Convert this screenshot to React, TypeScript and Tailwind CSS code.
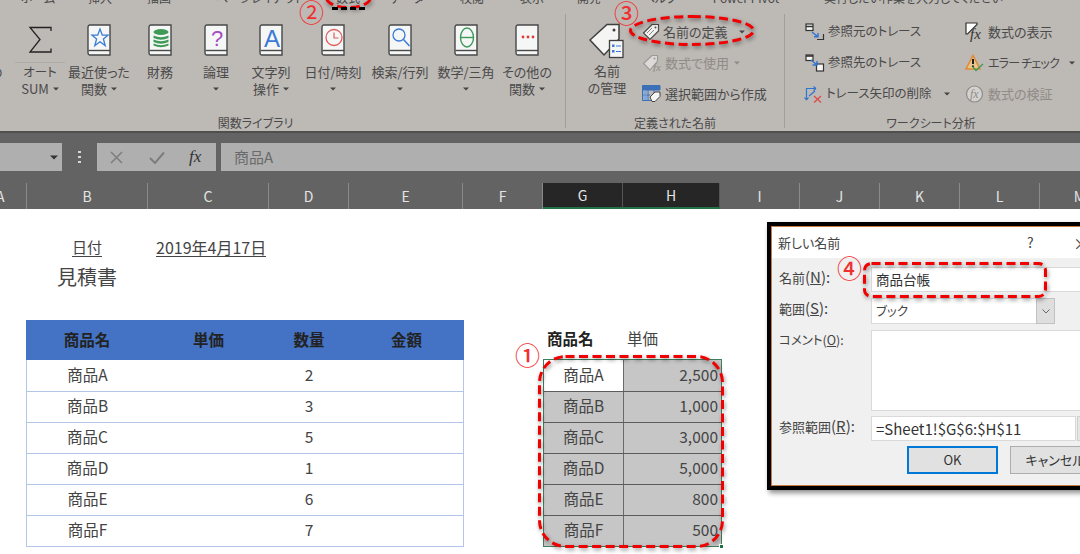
import type { ReactNode } from "react";

const TABS: [string, string][] = [
  ["ホーム", "w-[76px]"],
  ["挿入", "w-[48px]"],
  ["描画", "w-[70px]"],
  ["ページレイアウト", "w-[132px]"],
  ["数式", "w-[44px]"],
  ["データ", "w-[74px]"],
  ["校閲", "w-[56px]"],
  ["表示", "w-[64px]"],
  ["開発", "w-[50px]"],
  ["ヘルプ", "w-[92px]"],
  ["Power Pivot", "w-[80px]"],
];

const COLS: [string, string, boolean][] = [
  ["B", "w-[121px]", false],
  ["C", "w-[121px]", false],
  ["D", "w-[80px]", false],
  ["E", "w-[114px]", false],
  ["F", "w-[80px]", false],
  ["G", "w-[80px]", true],
  ["H", "w-[97px]", true],
  ["I", "w-[80px]", false],
  ["J", "w-[80px]", false],
  ["K", "w-[80px]", false],
  ["L", "w-[80px]", false],
  ["M", "w-[80px]", false],
];

const ITEMS = [
  { name: "商品A", qty: "2", price: "2,500" },
  { name: "商品B", qty: "3", price: "1,000" },
  { name: "商品C", qty: "5", price: "3,000" },
  { name: "商品D", qty: "1", price: "5,000" },
  { name: "商品E", qty: "6", price: "800" },
  { name: "商品F", qty: "7", price: "500" },
];

function Caret({ gray }: { gray?: boolean }) {
  return (
    <svg width="6" height="4" viewBox="0 0 6 4" className="inline-block shrink-0">
      <path d="M0 0.500H6L3 3.500Z" fill={gray ? "#8f8b87" : "#444"} />
    </svg>
  );
}

function Book({ children }: { children: ReactNode }) {
  return (
    <svg width="24" height="32" viewBox="0 0 24 32">
      <path d="M3 1H23V31H3Q1 31 1 28.500V3.500Q1 1 3 1Z" fill="#f5f7f7" stroke="#484848" strokeWidth="1.400" />
      <path d="M1.500 26.500H23" stroke="#484848" strokeWidth="1.400" />
      {children}
    </svg>
  );
}

function FuncButton({
  icon,
  line1,
  line2,
  w,
}: {
  icon: ReactNode;
  line1: string;
  line2?: string;
  w: string;
}) {
  return (
    <div className={`${w} flex flex-col items-center shrink-0`}>
      <div className="h-[49px] pt-[10px] flex items-start justify-center">{icon}</div>
      <div className="text-[13px] leading-[17px] text-center whitespace-nowrap">{line1}</div>
      <div className="h-[17px] flex items-center justify-center gap-[4px] text-[13px] leading-[17px] whitespace-nowrap">
        {line2 && <span>{line2}</span>}
        <Caret />
      </div>
    </div>
  );
}

function SmallRow({
  icon,
  label,
  caret,
  gray,
  gap,
  caretGap,
  labelClass,
}: {
  icon: ReactNode;
  label: string;
  caret?: boolean;
  gray?: boolean;
  gap: string;
  caretGap?: string;
  labelClass?: string;
}) {
  return (
    <div className={`h-[31px] flex items-center ${gap} whitespace-nowrap ${gray ? "text-[#8f8b87]" : ""}`}>
      {icon}
      <span className={labelClass ?? "text-[13px]"}>{label}</span>
      {caret && (
        <span className={`flex ${caretGap ?? "ml-[2px]"}`}>
          <Caret gray={gray} />
        </span>
      )}
    </div>
  );
}

function TagIcon() {
  return (
    <svg width="18" height="18" viewBox="0 0 18 18">
      <path d="M1.500 10L10 1.500H16.500V8L8 16.500Z" fill="#f2f2f0" stroke="#4a4a4a" strokeWidth="1.200" />
      <circle cx="13.500" cy="4.500" r="1" fill="#4a4a4a" />
      <path d="M5 10L10 5M7 12L12 7" stroke="#777" strokeWidth="0.900" />
    </svg>
  );
}

function FxText({ x, y, size, fill }: { x: number; y: number; size: number; fill: string }) {
  return (
    <text x={x} y={y} fontSize={size} fill={fill} fontStyle="italic" fontFamily="'Liberation Serif', serif">
      fx
    </text>
  );
}

function Ribbon() {
  return (
    <div className="h-[131px] bg-[#bdb9b5] text-[#4a4a4a] overflow-hidden">
      <div className="h-[14px] overflow-hidden flex">
        {TABS.map(([t, w]) => (
          <div key={t} className={`${w} text-center text-[12px] leading-[14px] -mt-[9px] whitespace-nowrap`}>
            {t}
          </div>
        ))}
        <div className="ml-[38px] text-[12px] leading-[14px] -mt-[9px] whitespace-nowrap">
          実行したい作業を入力してください
        </div>
      </div>

      <div className="flex h-[117px]">
        {/* 関数ライブラリ */}
        <div className="w-[566px] h-[114px] border-r border-[#a29e9a] flex flex-col shrink-0">
          <div className="flex-1 flex pl-[15px] relative">
            <span className="absolute left-0 top-[49px] text-[13px] leading-[17px] -ml-[10px]">の</span>
            <div className="w-[50px] flex flex-col items-center shrink-0">
              <div className="h-[49px] pt-[12px] w-full flex flex-col items-center border-b border-[#aeaaa6]">
                <svg width="24" height="28" viewBox="0 0 24 28">
                  <path d="M23 5V1.500H2L12 13.500L2 26H23V22.500" fill="none" stroke="#222" strokeWidth="1.300" />
                </svg>
              </div>
              <div className="text-[12.500px] leading-[17px] text-center">オート</div>
              <div className="h-[17px] flex items-center gap-[4px] text-[13px] leading-[17px]">
                <span>SUM</span>
                <Caret />
              </div>
            </div>
            <FuncButton
              w="w-[68px]"
              line1="最近使った"
              line2="関数"
              icon={
                <Book>
                  <path
                    d="M13 5L15.300 11.200H21L16.400 15L18.200 21.500L13 17.700L7.800 21.500L9.600 15L5 11.200H10.700Z"
                    fill="none"
                    stroke="#3b7ad6"
                    strokeWidth="1.300"
                  />
                </Book>
              }
            />
            <FuncButton
              w="w-[54px]"
              line1="財務"
              icon={
                <Book>
                  <ellipse cx="13" cy="8" rx="7.500" ry="3" fill="#3f9a58" />
                  <path d="M5.500 11.500Q13 15 20.500 11.500V14Q13 17.500 5.500 14ZM5.500 15.500Q13 19 20.500 15.500V18Q13 21.500 5.500 18ZM5.500 19.500Q13 23 20.500 19.500V21.500Q13 25 5.500 21.500Z" fill="#3f9a58" />
                </Book>
              }
            />
            <FuncButton
              w="w-[58px]"
              line1="論理"
              icon={
                <Book>
                  <text x="13" y="22" textAnchor="middle" fontSize="22" fill="#a64dc4" fontFamily="'Liberation Sans', sans-serif">
                    ?
                  </text>
                </Book>
              }
            />
            <FuncButton
              w="w-[52px]"
              line1="文字列"
              line2="操作"
              icon={
                <Book>
                  <text x="13" y="22.500" textAnchor="middle" fontSize="24" fill="#3b7ad6" fontFamily="'Liberation Sans', sans-serif">
                    A
                  </text>
                </Book>
              }
            />
            <FuncButton
              w="w-[72px]"
              line1="日付/時刻"
              icon={
                <Book>
                  <circle cx="13" cy="13.500" r="8" fill="none" stroke="#e45a5a" strokeWidth="1.300" />
                  <path d="M13 8.500V14H17.500" fill="none" stroke="#e45a5a" strokeWidth="1.200" />
                </Book>
              }
            />
            <FuncButton
              w="w-[62px]"
              line1="検索/行列"
              icon={
                <Book>
                  <circle cx="11" cy="11" r="6" fill="none" stroke="#3b7ad6" strokeWidth="1.300" />
                  <path d="M15.500 15.500L21.500 22" stroke="#3b7ad6" strokeWidth="1.500" />
                </Book>
              }
            />
            <FuncButton
              w="w-[70px]"
              line1="数学/三角"
              icon={
                <Book>
                  <ellipse cx="13" cy="13.500" rx="6.500" ry="9.500" fill="none" stroke="#3f9a58" strokeWidth="1.400" />
                  <path d="M6.500 13.500H19.500" stroke="#3f9a58" strokeWidth="1.400" />
                </Book>
              }
            />
            <FuncButton
              w="w-[52px]"
              line1="その他の"
              line2="関数"
              icon={
                <Book>
                  <circle cx="8" cy="13" r="1.400" fill="#e03a3a" />
                  <circle cx="13" cy="13" r="1.400" fill="#e03a3a" />
                  <circle cx="18" cy="13" r="1.400" fill="#e03a3a" />
                </Book>
              }
            />
          </div>
          <div className="h-[15px] -mb-[2px] text-[12px] leading-[15px] text-center pr-[54px]">関数ライブラリ</div>
        </div>

        {/* 定義された名前 */}
        <div className="w-[219px] h-[114px] border-r border-[#a29e9a] flex flex-col shrink-0">
          <div className="flex-1 flex pl-[17px]">
            <div className="w-[48px] flex flex-col items-center shrink-0">
              <div className="h-[48px] pt-[9px]">
                <svg width="38" height="36" viewBox="0 0 38 36">
                  <path d="M2 17L19 1.500H31V16L16 32Z" fill="#f5f5f3" stroke="#3f3f3f" strokeWidth="1.500" />
                  <circle cx="26" cy="7" r="1.500" fill="#3f3f3f" />
                  <rect x="21.500" y="17.500" width="13.500" height="17" fill="#f5f7f7" stroke="#3f3f3f" strokeWidth="1.300" />
                  <path d="M24 21.500h2.500v2.500h-2.500zM24 27h2.500v2.500h-2.500z" fill="#3b7ad6" />
                  <path d="M28 23H33M28 28.500H33" stroke="#3b7ad6" strokeWidth="1.200" />
                </svg>
              </div>
              <div className="text-[13px] leading-[17px]">名前</div>
              <div className="text-[13px] leading-[17px] whitespace-nowrap">の管理</div>
            </div>
            <div className="ml-[11px] pt-[2px] flex flex-col">
              <SmallRow icon={<TagIcon />} label="名前の定義" caret gap="gap-[3px]" caretGap="ml-[8px]" />
              <SmallRow
                gray
                gap="gap-[3px]"
                label="数式で使用"
                caret
                icon={
                  <svg width="20" height="18" viewBox="0 0 20 18">
                    <path d="M1.500 9.500L10 1.500H15.500V7L8 16Z" fill="#dcdad8" stroke="#9a9794" strokeWidth="1.100" />
                    <circle cx="12.500" cy="4.500" r="1" fill="#9a9794" />
                    <FxText x={11} y={17} size={11} fill="#8f8b87" />
                  </svg>
                }
              />
              <SmallRow
                gap="gap-[4px]"
                label="選択範囲から作成"
                icon={
                  <svg width="19" height="17" viewBox="0 0 19 17">
                    <path d="M0.500 0.500H18V5H0.500Z" fill="#3b6fb8" stroke="#3b6fb8" />
                    <path d="M0.500 5V15.500H10M0.500 10H8M6 5V15.500M12 5V8" fill="none" stroke="#3b6fb8" strokeWidth="1" />
                    <path d="M1.500 6h4v3.500h-4zM1.500 11h4v4h-4z" fill="#7fa8dc" />
                    <path d="M8 12L13 7H18V11.500L13 16.500H10Z" fill="#f5f5f3" stroke="#444" strokeWidth="1" />
                  </svg>
                }
              />
            </div>
          </div>
          <div className="h-[15px] -mb-[2px] text-[12px] leading-[15px] text-center">定義された名前</div>
        </div>

        {/* ワークシート分析 */}
        <div className="flex-1 h-[114px] flex flex-col min-w-0">
          <div className="flex-1 flex">
            <div className="w-[180px] pl-[20px] pt-[2px] flex flex-col shrink-0">
              <SmallRow
                gap="gap-[3px]"
                label="参照元のトレース"
                labelClass="text-[12.500px]"
                icon={
                  <svg width="20" height="18" viewBox="0 0 20 18">
                    <rect x="1" y="1" width="7" height="6.500" fill="#f5f5f3" stroke="#333" strokeWidth="1.200" />
                    <path d="M1 3.500H8" stroke="#333" strokeWidth="1.500" />
                    <path d="M12 16.500H18.500V11" fill="none" stroke="#333" strokeWidth="1.200" />
                    <path d="M7 9L12.500 13.500M9 13.800H13V10" fill="none" stroke="#2f74d0" strokeWidth="1.400" />
                  </svg>
                }
              />
              <SmallRow
                gap="gap-[3px]"
                label="参照先のトレース"
                labelClass="text-[12.500px]"
                icon={
                  <svg width="20" height="18" viewBox="0 0 20 18">
                    <rect x="1" y="1" width="7" height="5.500" fill="#f5f5f3" stroke="#333" strokeWidth="1.200" />
                    <path d="M1 2H8" stroke="#333" strokeWidth="1.600" />
                    <rect x="11.500" y="10" width="7" height="7" fill="#f5f5f3" stroke="#333" strokeWidth="1.200" />
                    <path d="M6 6L11.500 10.500M7.500 11H12V7" fill="none" stroke="#2f74d0" strokeWidth="1.400" />
                  </svg>
                }
              />
              <div className="-ml-[1px]">
                <SmallRow
                  gap="gap-[4px]"
                  label="トレース矢印の削除"
                  labelClass="text-[12.500px]"
                  caret
                  caretGap="ml-[8px]"
                  icon={
                    <svg width="18" height="18" viewBox="0 0 18 18">
                      <path d="M2.500 15V3.500H12M2.500 15L0.500 12.500M2.500 15L4.500 12.500M12 3.500L9.500 1.500M12 3.500L9.500 5.500M5 11L11 6" fill="none" stroke="#2f74d0" strokeWidth="1.200" />
                      <path d="M10 11L17 17.500M17 11L10 17.500" stroke="#e04a4a" strokeWidth="1.300" />
                    </svg>
                  }
                />
              </div>
            </div>
            <div className="pt-[2px] flex flex-col">
              <SmallRow
                gap="gap-[4px]"
                label="数式の表示"
                icon={
                  <svg width="19" height="20" viewBox="0 0 19 20">
                    <path d="M1 1H12V2.500L2.500 12H1Z" fill="#fff" stroke="#333" strokeWidth="1.200" />
                    <FxText x={5} y={17} size={15} fill="#333" />
                  </svg>
                }
              />
              <SmallRow
                gap="gap-[4px]"
                label="エラー チェック"
                labelClass="text-[12px] tracking-[-0.800px]"
                caret
                caretGap="ml-[6px]"
                icon={
                  <svg width="19" height="18" viewBox="0 0 19 18">
                    <path d="M8 1.500L1 15H15Z" fill="#e9c48d" stroke="#e08a35" strokeWidth="1.500" />
                    <path d="M8 5V10" stroke="#222" strokeWidth="2" />
                    <circle cx="8" cy="12.300" r="1" fill="#222" />
                    <path d="M8 13L11 16.500L18 10" fill="none" stroke="#3f9a58" strokeWidth="1.400" />
                  </svg>
                }
              />
              <SmallRow
                gray
                gap="gap-[4px]"
                label="数式の検証"
                icon={
                  <svg width="19" height="18" viewBox="0 0 19 18">
                    <circle cx="9.500" cy="9" r="8" fill="#d4d2cf" stroke="#8f8b87" strokeWidth="1.200" />
                    <FxText x={5} y={13} size={12} fill="#8f8b87" />
                  </svg>
                }
              />
            </div>
          </div>
          <div className="h-[15px] -mb-[2px] text-[12px] leading-[15px] text-center pr-[3px]">ワークシート分析</div>
        </div>
      </div>
    </div>
  );
}

function FormulaBar() {
  return (
    <div className="h-[52px] bg-[#636363] border-t-2 border-[#4f4f4f] pt-[10px] flex items-start">
      <div className="w-[62px] h-[28px] bg-[#afafaf] flex items-center justify-end pr-[4px]">
        <svg width="8" height="5" viewBox="0 0 8 5">
          <path d="M0 0.500H8L4 4.500Z" fill="#333" />
        </svg>
      </div>
      <div className="w-[35px] h-[28px] flex flex-col items-center justify-center gap-[3px]">
        <span className="w-[3px] h-[2px] bg-[#d8d8d8]" />
        <span className="w-[3px] h-[2px] bg-[#d8d8d8]" />
        <span className="w-[3px] h-[2px] bg-[#d8d8d8]" />
      </div>
      <div className="w-[119px] h-[28px] bg-[#afafaf] flex items-center pl-[13px]">
        <svg width="13" height="13" viewBox="0 0 13 13">
          <path d="M1 1L12 12M12 1L1 12" stroke="#7d7d7d" strokeWidth="1.500" />
        </svg>
        <svg width="16" height="13" viewBox="0 0 16 13" className="ml-[26px]">
          <path d="M1 7L6 12L15 1.500" fill="none" stroke="#7d7d7d" strokeWidth="2" />
        </svg>
        <span className="ml-[24px] text-[17px] italic text-[#333] font-['Liberation_Serif',serif]">fx</span>
      </div>
      <div className="flex-1 ml-[5px] h-[28px] bg-[#afafaf] pl-[13px] text-[15px] leading-[28px] text-[#6a6a6a]">商品A</div>
    </div>
  );
}

function ColumnHeaders() {
  return (
    <div className="h-[26px] bg-[#636363] flex overflow-hidden">
      <div className="w-[27px] h-full shrink-0 flex items-center border-r border-[#8a8a8a] text-[14px] text-[#e4e4e4]">
        <span className="-ml-[4px]">A</span>
      </div>
      {COLS.map(([c, w, active]) => (
        <div
          key={c}
          className={`${w} h-full shrink-0 flex items-center justify-center text-[14px] text-[#e4e4e4] border-r ${
            active ? "bg-[#262626] border-[#555] border-b-2 border-b-[#217346]" : "border-[#8a8a8a]"
          }`}
        >
          {c}
        </div>
      ))}
    </div>
  );
}

function Sheet() {
  return (
    <div className="flex-1 flex text-[#444] bg-white">
      <div className="w-[543px] shrink-0 pl-[26px] pt-[23px]">
        <div className="h-[31px] flex items-center">
          <div className="w-[122px] flex justify-center">
            <span className="text-[15px] leading-[18px] border-b border-[#444]">日付</span>
          </div>
          <div className="w-[121px] pl-[8px] flex">
            <span className="text-[16px] leading-[18px] border-b border-[#444] whitespace-nowrap">2019年4月17日</span>
          </div>
        </div>
        <div className="w-[122px] h-[27px] mb-[30px] flex items-center justify-center text-[20px] leading-[27px]">見積書</div>
        <div className="w-[438px] border-x border-b border-[#b4c6e7]">
          <div className="h-[40px] -mx-px grid grid-cols-[122px_121px_80px_115px] items-center bg-[#4472c4] text-[15.500px] font-bold text-[#222] text-center">
            <div>商品名</div>
            <div>単価</div>
            <div>数量</div>
            <div>金額</div>
          </div>
          {ITEMS.map((it, i) => (
            <div
              key={it.name}
              className={`h-[31px] pb-[2px] grid grid-cols-[121px_121px_80px_114px] items-center text-[15.500px] text-center ${
                i > 0 ? "border-t border-[#b4c6e7]" : ""
              }`}
            >
              <div>{it.name}</div>
              <div />
              <div>{it.qty}</div>
              <div />
            </div>
          ))}
        </div>
      </div>

      <div className="pt-[111px]">
        <div className="h-[39px] pb-[2px] flex items-center text-[15.500px]">
          <div className="w-[80px] pl-[4px] font-bold text-[#222]">商品名</div>
          <div className="pl-[4px]">単価</div>
        </div>
        <div className="relative w-[179px] border-[1.500px] border-[#3f7f5f]">
          {ITEMS.map((it, i) => (
            <div key={it.name} className={`h-[31px] flex text-[15.500px] ${i > 0 ? "border-t border-[#5c5c5c]" : ""}`}>
              <div
                className={`w-[80px] pb-[2px] border-r-[1.500px] border-[#6a6a6a] flex items-center justify-center ${
                  i === 0 ? "bg-white" : "bg-[#c6c6c6]"
                }`}
              >
                {it.name}
              </div>
              <div className="flex-1 pb-[2px] bg-[#c6c6c6] flex items-center justify-end pr-[3px]">{it.price}</div>
            </div>
          ))}
          <span className="absolute -right-[3px] -bottom-[3px] w-[5px] h-[5px] bg-[#217346] border border-white" />
        </div>
      </div>
    </div>
  );
}

function FieldLabel({ text, mnemonic }: { text: string; mnemonic: string }) {
  return (
    <div className="w-[99px] pl-[7px] text-[13px] leading-[20px] whitespace-nowrap shrink-0">
      {text}
      <span className="text-[15px]">
        (<span className="underline">{mnemonic}</span>):
      </span>
    </div>
  );
}

function Dialog() {
  return (
    <div className="absolute left-[767px] top-[222px] w-[350px] h-[268px] border-[4px] border-black shadow-[2px_3px_5px_rgba(0,0,0,0.45)] text-[#444]">
      <div className="h-full border border-[#c97b3f] flex flex-col bg-[#f0f0f0]">
        <div className="h-[31px] bg-white flex items-center pl-[6px] text-[13px] relative shrink-0">
          新しい名前
          <span className="absolute left-[255px] text-[14px]">?</span>
          <span className="absolute left-[301px] text-[16px]">×</span>
        </div>
        <div className="pt-[9px] flex flex-col">
          <div className="flex h-[25px]">
            <FieldLabel text="名前" mnemonic="N" />
            <div className="flex-1 bg-white border border-[#d9d9d9] pl-[4px] text-[13.500px] leading-[23px] text-[#333]">商品台帳</div>
          </div>
          <div className="flex h-[26px] mt-[6px]">
            <FieldLabel text="範囲" mnemonic="S" />
            <div className="w-[184px] bg-white border border-[#d9d9d9] pl-[4px] text-[12.500px] leading-[24px] flex justify-between">
              <span>ブック</span>
              <div className="w-[19px] -my-px -mr-px bg-[#dedede] border border-[#c2c2c2] flex items-center justify-center">
                <svg width="8" height="5" viewBox="0 0 8 5">
                  <path d="M0.500 0.500L4 4L7.500 0.500" fill="none" stroke="#666" />
                </svg>
              </div>
            </div>
          </div>
          <div className="flex h-[81px] mt-[6px]">
            <div className="w-[99px] pl-[7px] text-[12.500px] leading-[20px] whitespace-nowrap shrink-0">
              コメント(<span className="underline">O</span>):
            </div>
            <div className="flex-1 bg-white border border-[#d9d9d9]" />
          </div>
          <div className="flex h-[25px] mt-[5px]">
            <FieldLabel text="参照範囲" mnemonic="R" />
            <div className="w-[205px] bg-white border border-[#d9d9d9] pl-[4px] text-[15px] leading-[23px] text-[#333] whitespace-nowrap">
              =Sheet1!$G$6:$H$11
            </div>
            <div className="flex-1 ml-px bg-[#e6e6e6] border border-[#d0d0d0]" />
          </div>
          <div className="flex mt-[5px] ml-[135px] gap-[12px]">
            <div className="w-[91px] h-[28px] bg-[#e1e1e1] border-2 border-[#0078d7] flex items-center justify-center text-[13px] text-[#333]">OK</div>
            <div className="w-[90px] h-[28px] bg-[#e1e1e1] border border-[#adadad] flex items-center justify-center text-[13px] text-[#333] whitespace-nowrap">キャンセル</div>
          </div>
        </div>
      </div>
    </div>
  );
}

// red dashed marks drawn over the screenshot
function DashMark({
  w,
  h,
  rx,
  ry,
  className,
}: {
  w: number;
  h: number;
  rx: number;
  ry: number;
  className: string;
}) {
  return (
    <svg
      width={w}
      height={h}
      viewBox={`0 0 ${w} ${h}`}
      className={`absolute overflow-visible drop-shadow-[1px_2px_2px_rgba(0,0,0,0.45)] ${className}`}
    >
      <rect
        x="1.500"
        y="1.500"
        width={w - 3}
        height={h - 3}
        rx={rx}
        ry={ry}
        fill="none"
        stroke="#f00000"
        strokeWidth="3"
        strokeDasharray="9 4.500"
      />
    </svg>
  );
}

function Annotations() {
  const num = "absolute text-[25px] leading-[25px] text-[#f03030]";
  return (
    <>
      <DashMark w={47} h={23} rx={23} ry={11} className="left-[325px] -top-[14px]" />
      <div className="absolute left-[332px] top-[7px] w-[33px] border-t-[3px] border-dashed border-black" />
      <DashMark w={126} h={31} rx={63} ry={15} className="left-[629px] top-[15px]" />
      <DashMark w={184} h={36} rx={7} ry={7} className="left-[863px] top-[262px]" />
      <DashMark w={186} h={193} rx={26} ry={26} className="left-[538px] top-[355px]" />
      <span className={`${num} left-[299px] top-[-1px]`}>②</span>
      <span className={`${num} font-medium left-[614px] top-0`}>③</span>
      <span className={`${num} font-medium left-[837px] top-[255px]`}>④</span>
      <span className={`${num} font-medium left-[515px] top-[342px]`}>①</span>
    </>
  );
}

export default function App() {
  return (
    <div className="relative w-[1080px] h-[554px] overflow-hidden flex flex-col bg-white font-['Noto_Sans_CJK_JP',sans-serif] [font-feature-settings:'palt']">
      <Ribbon />
      <FormulaBar />
      <ColumnHeaders />
      <Sheet />
      <Dialog />
      <Annotations />
    </div>
  );
}
